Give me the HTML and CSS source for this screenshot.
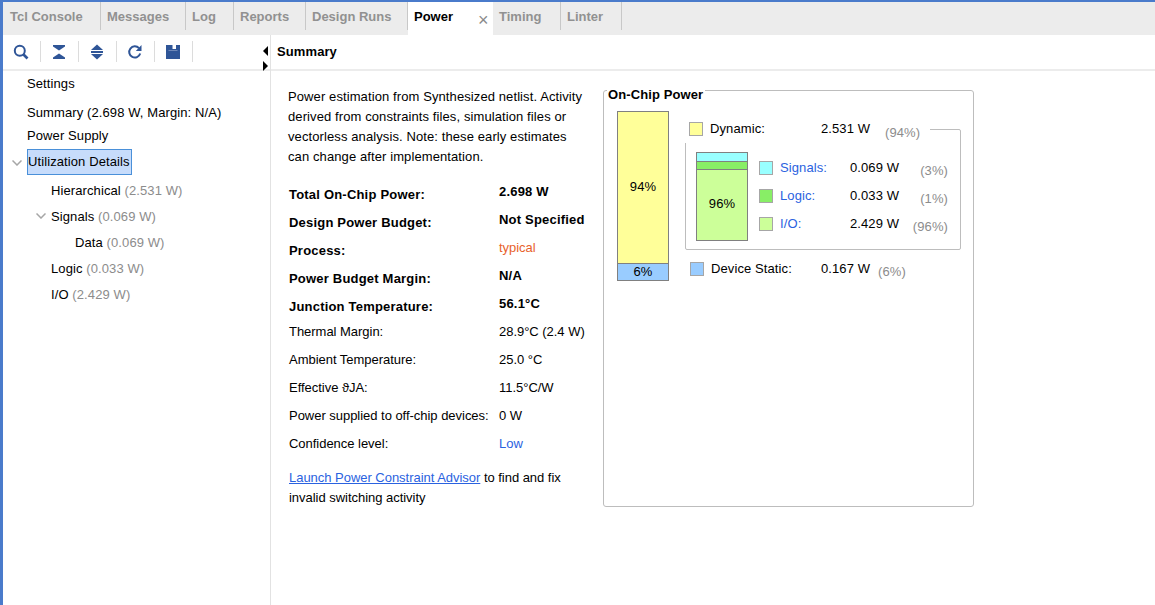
FILE: index.html

```html
<!DOCTYPE html>
<html lang="en">
<head>
    <meta charset="UTF-8">
    <title>Power</title>
    <link rel="stylesheet" href="styles.css">
</head>
<body>
    <div class="app">
        <div class="tabs">
            <div class="tab tab-tcl">Tcl Console</div>
            <div class="tab tab-messages">Messages</div>
            <div class="tab tab-log">Log</div>
            <div class="tab tab-reports">Reports</div>
            <div class="tab tab-runs">Design Runs</div>
            <div class="tab tab-power">Power<span class="tab-close">&#215;</span></div>
            <div class="tab tab-timing">Timing</div>
            <div class="tab tab-linter">Linter</div>
        </div>

        <div class="main">
            <div class="side">
                <div class="toolbar">
                    <div class="tool">
                        <svg width="16" height="16" viewBox="0 0 16 16"><circle cx="6.8" cy="6.8" r="5" fill="none" stroke="#2f5597" stroke-width="2"/><path d="M10.5 10.5L14.5 14.5" stroke="#2f5597" stroke-width="2.6"/></svg>
                    </div>
                    <div class="tool">
                        <svg width="16" height="16" viewBox="0 0 16 16"><path d="M2 1H14V2.5L8 6.5L2 2.5Z" fill="#2f5597"/><path d="M8 9.5L14 13.5V15H2V13.5Z" fill="#2f5597"/></svg>
                    </div>
                    <div class="tool">
                        <svg width="16" height="16" viewBox="0 0 16 16"><path d="M8 0.5L14 6H2Z" fill="#2f5597"/><path d="M2 7H14V9H2Z" fill="#2f5597"/><path d="M2 10H14L8 15.5Z" fill="#2f5597"/></svg>
                    </div>
                    <div class="tool">
                        <svg width="16" height="16" viewBox="0 0 16 16"><path d="M13.2 9.5A5.6 5.6 0 1 1 12 4.2" fill="none" stroke="#2f5597" stroke-width="2"/><path d="M14.5 1V7H8.8Z" fill="#2f5597"/></svg>
                    </div>
                    <div class="tool">
                        <svg width="16" height="16" viewBox="0 0 16 16"><path d="M1 1H15V15H1Z" fill="#2f5597"/><path d="M7.5 1H11V5H7.5Z" fill="#fff"/><path d="M3.5 6H12.5V7H3.5Z" fill="#6f88b8"/></svg>
                    </div>
                    <div class="splitter">
                        <span class="arrow-left"></span>
                        <span class="arrow-right"></span>
                    </div>
                </div>

                <ul class="tree">
                    <li class="node node-settings">Settings</li>
                    <li class="node node-summary">Summary (2.698 W, Margin: N/A)</li>
                    <li class="node">Power Supply</li>
                    <li class="node node-selected">
                        <svg class="chevron" width="10" height="6" viewBox="0 0 10 6"><path d="M0.5 0.5L5 5L9.5 0.5" fill="none" stroke="#a6a6a6" stroke-width="1.5"/></svg>
                        <span class="selected-label">Utilization Details</span>
                    </li>
                    <li class="node level-1">Hierarchical <span class="muted">(2.531 W)</span></li>
                    <li class="node level-1">
                        <svg class="chevron" width="10" height="6" viewBox="0 0 10 6"><path d="M0.5 0.5L5 5L9.5 0.5" fill="none" stroke="#a6a6a6" stroke-width="1.5"/></svg>
                        Signals <span class="muted">(0.069 W)</span>
                    </li>
                    <li class="node level-2">Data <span class="muted">(0.069 W)</span></li>
                    <li class="node level-1">Logic <span class="muted">(0.033 W)</span></li>
                    <li class="node level-1">I/O <span class="muted">(2.429 W)</span></li>
                </ul>
            </div>

            <div class="content">
                <div class="panel-title">Summary</div>
                <div class="panel-body">
                    <div class="summary">
                        <p class="intro">Power estimation from Synthesized netlist. Activity derived from constraints files, simulation files or vectorless analysis. Note: these early estimates can change after implementation.</p>

                        <div class="facts">
                            <div class="fact-label strong">Total On-Chip Power:</div>
                            <div class="fact-value strong">2.698 W</div>
                            <div class="fact-label strong">Design Power Budget:</div>
                            <div class="fact-value strong">Not Specified</div>
                            <div class="fact-label strong">Process:</div>
                            <div class="fact-value orange">typical</div>
                            <div class="fact-label strong">Power Budget Margin:</div>
                            <div class="fact-value strong">N/A</div>
                            <div class="fact-label strong">Junction Temperature:</div>
                            <div class="fact-value strong">56.1°C</div>
                            <div class="fact-label">Thermal Margin:</div>
                            <div class="fact-value">28.9°C (2.4 W)</div>
                            <div class="fact-label">Ambient Temperature:</div>
                            <div class="fact-value">25.0 °C</div>
                            <div class="fact-label">Effective ϑJA:</div>
                            <div class="fact-value">11.5°C/W</div>
                            <div class="fact-label">Power supplied to off-chip devices:</div>
                            <div class="fact-value">0 W</div>
                            <div class="fact-label">Confidence level:</div>
                            <div class="fact-value blue">Low</div>
                        </div>

                        <p class="advisor"><a class="link" href="#">Launch Power Constraint Advisor</a> to find and fix invalid switching activity</p>
                    </div>

                    <div class="chip-box">
                        <div class="chip-title">On-Chip Power</div>
                        <div class="chip-chart">
                            <div class="bar bar-main">
                                <div class="seg seg-dynamic">94%</div>
                                <div class="seg seg-static">6%</div>
                            </div>
                            <div class="breakdown">
                                <div class="dynamic-box">
                                    <div class="legend-row dynamic-row">
                                        <span class="swatch sw-dynamic"></span>
                                        <span>Dynamic:</span>
                                        <span class="watts">2.531 W</span>
                                        <span class="pct">(94%)</span>
                                    </div>
                                    <div class="dynamic-inner">
                                        <div class="bar bar-sub">
                                            <div class="seg seg-signals"></div>
                                            <div class="seg seg-logic"></div>
                                            <div class="seg seg-io">96%</div>
                                        </div>
                                        <div class="sub-legend">
                                            <div class="sub-row">
                                                <span class="swatch sw-signals"></span>
                                                <span class="blue">Signals:</span>
                                                <span class="watts">0.069 W</span>
                                                <span class="pct">(3%)</span>
                                            </div>
                                            <div class="sub-row">
                                                <span class="swatch sw-logic"></span>
                                                <span class="blue">Logic:</span>
                                                <span class="watts">0.033 W</span>
                                                <span class="pct">(1%)</span>
                                            </div>
                                            <div class="sub-row">
                                                <span class="swatch sw-io"></span>
                                                <span class="blue">I/O:</span>
                                                <span class="watts">2.429 W</span>
                                                <span class="pct">(96%)</span>
                                            </div>
                                        </div>
                                    </div>
                                </div>
                                <div class="legend-row static-row">
                                    <span class="swatch sw-static"></span>
                                    <span>Device Static:</span>
                                    <span class="watts">0.167 W</span>
                                    <span class="pct">(6%)</span>
                                </div>
                            </div>
                        </div>
                    </div>
                </div>
            </div>
        </div>
    </div>
</body>
</html>
```

FILE: styles.css

```css
* {
    box-sizing: border-box;
}
body {
    margin: 0;
    font-family: "Liberation Sans", Arial, sans-serif;
    font-size: 13px;
    letter-spacing: 0.1px;
    color: #000;
    background-color: #fff;
    overflow: hidden;
}
.app {
    width: 1155px;
    height: 605px;
    border-top: 2px solid #4a7bcb;
    border-left: 3px solid #4a7bcb;
    display: flex;
    flex-direction: column;
}

/* tabs */
.tabs {
    height: 33px;
    display: flex;
    background-color: #ececec;
}
.tab {
    height: 28px;
    padding: 7px 0 0 6px;
    border-right: 1px solid #c8c8c8;
    font-weight: bold;
    letter-spacing: 0;
    color: #919191;
}
.tab-tcl { width: 98px; padding-left: 7px; }
.tab-messages { width: 85px; }
.tab-log { width: 48px; }
.tab-reports { width: 72px; }
.tab-runs { width: 102px; }
.tab-power {
    width: 85px;
    height: 33px;
    border-right: 0;
    background-color: #fff;
    color: #000;
    position: relative;
}
.tab-close {
    position: absolute;
    left: 70px;
    top: 8px;
    font-weight: normal;
    font-size: 18px;
    color: #8a8a8a;
}
.tab-timing { width: 68px; }
.tab-linter { width: 61px; }

.main {
    flex: 1;
    display: flex;
}

/* left side */
.side {
    width: 268px;
    border-right: 1px solid #e2e2e2;
}
.toolbar {
    height: 36px;
    border-bottom: 2px solid #ececec;
    display: flex;
    align-items: flex-start;
    padding-top: 6px;
    position: relative;
}
.tool {
    width: 38px;
    height: 21px;
    padding-right: 2px;
    border-right: 1px solid #dcdcdc;
    display: flex;
    align-items: center;
    justify-content: center;
}
.splitter {
    position: absolute;
    left: 260px;
    top: 11px;
}
.arrow-left,
.arrow-right {
    display: block;
    width: 0;
    height: 0;
    border-top: 5px solid transparent;
    border-bottom: 5px solid transparent;
}
.arrow-left {
    border-right: 5px solid #000;
    margin-bottom: 5px;
}
.arrow-right {
    border-left: 5px solid #000;
}
.tree {
    list-style: none;
    margin: 0;
    padding: 0 0 0 24px;
}
.node {
    height: 26px;
    line-height: 26px;
    position: relative;
    white-space: nowrap;
}
.node-settings {
    margin-bottom: 3px;
}
.node-summary {
    height: 23px;
}
.node-selected {
    margin-bottom: 3px;
}
.selected-label {
    display: inline-block;
    height: 26px;
    line-height: 24px;
    border: 1px solid #4a90d9;
    background-color: #c7dcfb;
    padding-right: 1px;
    vertical-align: top;
}
.level-1 {
    padding-left: 24px;
}
.level-2 {
    padding-left: 48px;
}
.chevron {
    position: absolute;
    top: 9px;
    margin-left: -15px;
}
.node-selected .chevron {
    top: 11px;
}
.muted {
    color: #8c8c8c;
}

/* right side */
.content {
    flex: 1;
}
.panel-title {
    height: 36px;
    padding: 9px 0 0 6px;
    border-bottom: 2px solid #ececec;
    font-weight: bold;
}
.panel-body {
    display: flex;
    padding: 16px 0 0 17px;
}
.summary {
    width: 315px;
}
.intro {
    margin: 0;
    line-height: 20px;
    width: 300px;
}
.facts {
    display: grid;
    grid-template-columns: 210px 1fr;
    grid-auto-rows: 28px;
    margin-top: 14px;
    padding-left: 1px;
    line-height: 22px;
    letter-spacing: -0.03px;
}
.fact-label {
    white-space: nowrap;
}
.fact-label.strong {
    line-height: 28px;
}
.strong {
    font-weight: bold;
    letter-spacing: 0.2px;
}
.blue {
    color: #2a62e0;
}
.orange {
    color: #e8622c;
}
.advisor {
    margin: 7px 0 0 1px;
    line-height: 20px;
    width: 290px;
    letter-spacing: -0.03px;
}
.link {
    color: #2a62e0;
}

/* on-chip box */
.chip-box {
    width: 371px;
    height: 417px;
    margin-top: 3px;
    border: 1px solid #bdbdbd;
    border-radius: 3px;
    position: relative;
    padding: 20px 0 0 13px;
}
.chip-title {
    position: absolute;
    left: 3px;
    top: -4px;
    padding: 0 2px 0 1px;
    background-color: #fff;
    font-weight: bold;
    line-height: 16px;
}
.chip-chart {
    display: flex;
}
.bar {
    width: 52px;
    border: 1px solid #808080;
    display: flex;
    flex-direction: column;
}
.bar-main {
    height: 170px;
}
.bar-sub {
    height: 89px;
    flex-shrink: 0;
}
.seg {
    display: flex;
    align-items: center;
    justify-content: center;
}
.seg-dynamic {
    flex: 1;
    padding-bottom: 2px;
    background-color: #ffff99;
}
.seg-static {
    height: 17px;
    padding-bottom: 1px;
    border-top: 1px solid #808080;
    background-color: #99ccff;
}
.seg-signals {
    height: 8px;
    background-color: #99ffff;
}
.seg-logic {
    height: 9px;
    border-top: 1px solid #808080;
    border-bottom: 1px solid #808080;
    background-color: #88ee66;
}
.seg-io {
    flex: 1;
    padding-bottom: 3px;
    background-color: #ccff99;
}
.breakdown {
    margin-left: 16px;
    padding-top: 18px;
}
.dynamic-box {
    width: 276px;
    height: 121px;
    border: 1px solid #bdbdbd;
    border-radius: 2px;
}
.legend-row {
    display: grid;
    height: 28px;
    align-items: start;
}
.dynamic-row {
    grid-template-columns: 21px 111px 64px auto;
    line-height: 14px;
    width: 245px;
    margin: -15px 0 0 -1px;
    padding: 7px 0 0 4px;
    background-color: #fff;
}
.static-row {
    grid-template-columns: 21px 110px 57px auto;
    line-height: 14px;
    margin: 12px 0 0 5px;
}
.swatch {
    display: block;
    width: 14px;
    height: 14px;
    border: 1px solid #a6a6a6;
}
.sw-dynamic { background-color: #ffff99; }
.sw-static { background-color: #99ccff; }
.sw-signals { background-color: #99ffff; }
.sw-logic { background-color: #88ee66; }
.sw-io { background-color: #ccff99; }
.pct {
    color: #8c8c8c;
    margin-top: 4px;
}
.static-row .pct {
    margin-top: 3px;
}
.dynamic-inner {
    display: flex;
    margin: 9px 0 0 10px;
}
.sub-legend {
    margin: 9px 0 0 11px;
}
.sub-row {
    display: grid;
    grid-template-columns: 21px 70px 1fr 40px;
    width: 189px;
    height: 28px;
    line-height: 14px;
}
.sub-row .pct {
    margin-top: 3px;
    text-align: right;
}
```
